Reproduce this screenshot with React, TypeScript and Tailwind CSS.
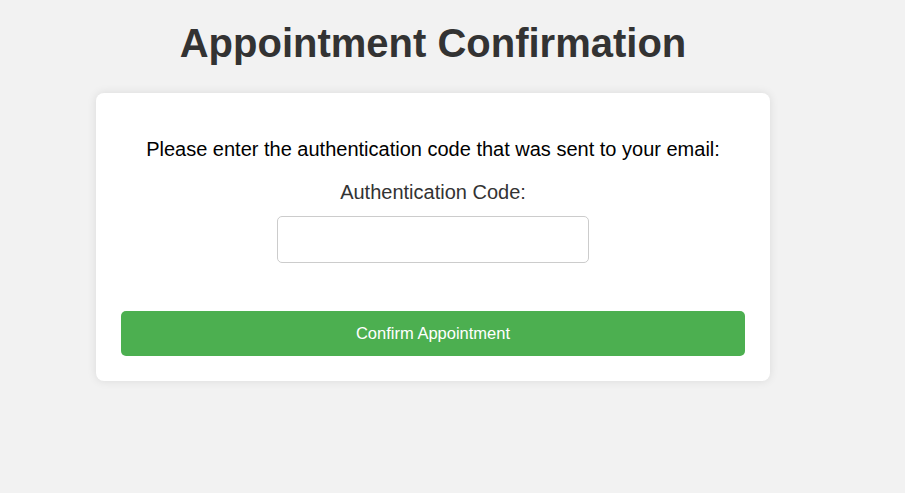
export default function App() {
  return (
    <div className="min-h-[493px] bg-[#f2f2f2] font-['Liberation_Sans',Arial,sans-serif]">
      <div className="ml-[96px] w-[674px] pt-[20px]">
        <h1 className="mb-[27px] text-center text-[40px] font-bold leading-[46px] text-[#333]">
          Appointment Confirmation
        </h1>

        <div className="rounded-[8px] bg-white p-[25px] text-center shadow-[0_0_10px_rgba(0,0,0,0.1)]">
          <p className="mt-[20px] text-[20px] leading-[23px] text-black">
            Please enter the authentication code that was sent to your email:
          </p>
          <form className="mt-[20px] flex flex-col items-center" onSubmit={(e) => e.preventDefault()}>
            <label htmlFor="code" className="text-[20px] leading-[23px] text-[#333]">
              Authentication Code:
            </label>
            <input
              id="code"
              type="text"
              className="mt-[12px] h-[47px] w-[312px] rounded-[5px] border border-[#ccc] bg-white px-3 text-[16px] outline-none"
            />
            <button
              type="submit"
              className="mt-[48px] h-[45px] w-full rounded-[5px] bg-[#4caf50] text-[16.5px] text-white"
            >
              Confirm Appointment
            </button>
          </form>
        </div>
      </div>
    </div>
  );
}
